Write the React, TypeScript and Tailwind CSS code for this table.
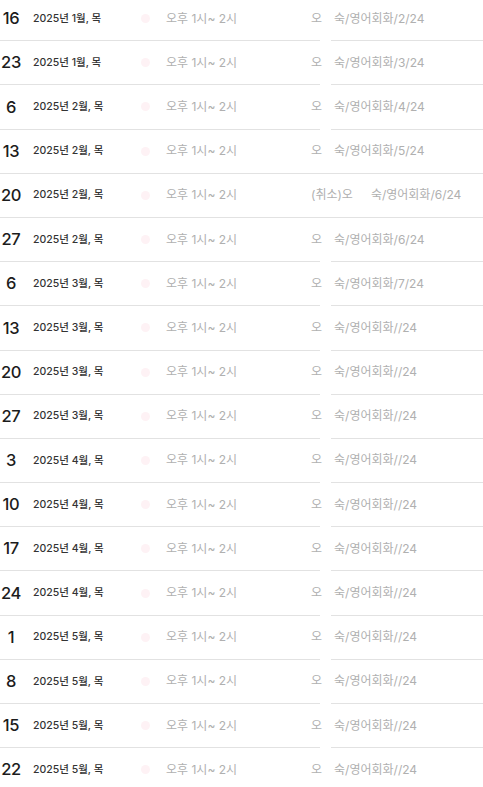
import React from 'react'

type Row = {day: number; month: number; pre: string; tail: string}

const rows: Row[] = [
  {day: 16, month: 1, pre: '오', tail: '숙/영어회화/2/24'},
  {day: 23, month: 1, pre: '오', tail: '숙/영어회화/3/24'},
  {day: 6, month: 2, pre: '오', tail: '숙/영어회화/4/24'},
  {day: 13, month: 2, pre: '오', tail: '숙/영어회화/5/24'},
  {day: 20, month: 2, pre: '(취소)오', tail: '숙/영어회화/6/24'},
  {day: 27, month: 2, pre: '오', tail: '숙/영어회화/6/24'},
  {day: 6, month: 3, pre: '오', tail: '숙/영어회화/7/24'},
  {day: 13, month: 3, pre: '오', tail: '숙/영어회화//24'},
  {day: 20, month: 3, pre: '오', tail: '숙/영어회화//24'},
  {day: 27, month: 3, pre: '오', tail: '숙/영어회화//24'},
  {day: 3, month: 4, pre: '오', tail: '숙/영어회화//24'},
  {day: 10, month: 4, pre: '오', tail: '숙/영어회화//24'},
  {day: 17, month: 4, pre: '오', tail: '숙/영어회화//24'},
  {day: 24, month: 4, pre: '오', tail: '숙/영어회화//24'},
  {day: 1, month: 5, pre: '오', tail: '숙/영어회화//24'},
  {day: 8, month: 5, pre: '오', tail: '숙/영어회화//24'},
  {day: 15, month: 5, pre: '오', tail: '숙/영어회화//24'},
  {day: 22, month: 5, pre: '오', tail: '숙/영어회화//24'},
]

const font = {fontFamily: 'Inter, "Noto Sans CJK KR", sans-serif'}

const App = () => {
  return (
    <div className="w-[483px] h-[787px] overflow-hidden bg-white" style={font}>
      <div className="-mt-[3px] flex flex-col">
        {rows.map((r, i) => (
          <div
            key={i}
            className="relative flex flex-row items-center h-[44.2px] border-b border-[#e2e2e2]"
          >
            <span className="w-[22px] text-center text-[16.5px] font-medium text-[#1c1c1c] tracking-[-0.3px]">
              {r.day}
            </span>
            <span className="ml-[11px] text-[10.5px] font-medium text-[#333]">
              2025년 {r.month}월, 목
            </span>
            <span className="absolute left-[141px] w-[9px] h-[9px] rounded-full bg-[#fef2f5]" />
            <span className="absolute left-[166px] text-[12px] text-[#b0b0b0]">오후 1시~ 2시</span>
            <span className="absolute left-[311px] flex flex-row text-[12px] text-[#b0b0b0]">
              <span>{r.pre}</span>
              <span className={i === 4 ? 'w-[18px]' : 'w-[12px]'} />
              <span>{r.tail}</span>
            </span>
            {i !== 3 && i !== 4 && (
              <span className="absolute left-[320px] -bottom-[1px] w-[11px] h-[3px] bg-white" />
            )}
          </div>
        ))}
      </div>
    </div>
  )
}

export default App
